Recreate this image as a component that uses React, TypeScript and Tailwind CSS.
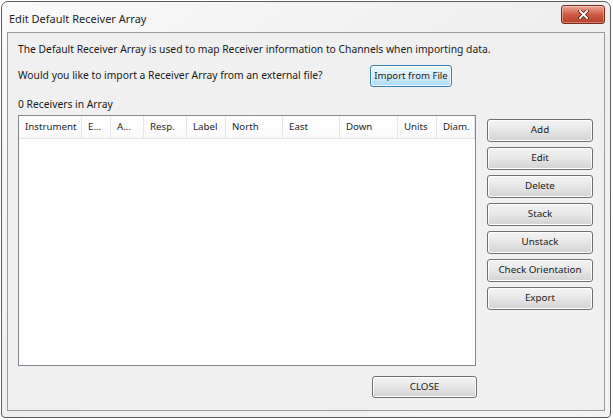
import React from "react";

const columns = [
  { label: "Instrument", w: "w-[63px]" },
  { label: "E...", w: "w-[29px]" },
  { label: "A...", w: "w-[33px]" },
  { label: "Resp.", w: "w-[43px]" },
  { label: "Label", w: "w-[39px]" },
  { label: "North", w: "w-[57px]" },
  { label: "East", w: "w-[57px]" },
  { label: "Down", w: "w-[58px]" },
  { label: "Units", w: "w-[39px]" },
  { label: "Diam.", w: "w-[38px]" },
];

const actions = ["Add", "Edit", "Delete", "Stack", "Unstack", "Check Orientation", "Export"];

const WinButton = ({ children, className = "" }: { children: React.ReactNode; className?: string }) => (
  <button
    className={`flex items-center justify-center rounded-[3px] border border-[#707070] bg-gradient-to-b from-[#f4f4f4] via-[#e6e6e6] to-[#d2d2d2] text-[9.8px] text-[#1a1a1a] shadow-[inset_0_0_0_1px_#fcfcfc] ${className}`}
  >
    {children}
  </button>
);

export default function App() {
  return (
    <div className="w-[613px] h-[420px] bg-white p-[1px] font-['Noto_Sans','Open_Sans',sans-serif]">
      <div className="w-[610px] h-[417px] rounded-t-[7px] rounded-b-[4px] border border-[#5c5c5c] bg-gradient-to-br from-[#fafafa] via-[#eeeeee] to-[#f4f4f4] flex flex-col">
        {/* title bar */}
        <div className="h-[30px] flex items-start">
          <span className="ml-[7px] mt-[9px] text-[11px] leading-[15px] text-[#1e1e1e]">
            Edit Default Receiver Array
          </span>
          <div className="ml-auto mr-[5px] mt-[3px] w-[44px] h-[19px] rounded-[3px] border border-[#7a2a1c] bg-gradient-to-b from-[#e9a797] via-[#d05a44] to-[#b8402a] shadow-[inset_0_0_0_1px_rgba(255,255,255,0.35)] flex items-center justify-center">
            <svg width="11" height="9" viewBox="0 0 11 9">
              <path d="M2 1 L9 8 M9 1 L2 8" stroke="#4a1a12" strokeWidth="3.4" strokeLinecap="square" />
              <path d="M2 1 L9 8 M9 1 L2 8" stroke="#ffffff" strokeWidth="1.9" strokeLinecap="square" />
            </svg>
          </div>
        </div>

        {/* client area */}
        <div className="mx-[5px] h-[379px] border border-[#9a9a9a] bg-[#f0f0f0] pl-[10px] flex flex-col text-[10.3px] text-[#1a1a1a]">
          <div className="mt-[8px] h-[16px] leading-[16px]">
            The Default Receiver Array is used to map Receiver information to Channels when importing data.
          </div>
          <div className="mt-[8px] h-[22px] flex items-center">
            <span className="w-[352px]">Would you like to import a Receiver Array from an external file?</span>
            <button className="w-[82px] h-[22px] rounded-[3px] border border-[#3c7fb1] bg-gradient-to-b from-[#eaf6fd] via-[#d9f0fc] to-[#a7d9f5] text-[9.6px] text-[#1a1a1a] whitespace-nowrap shadow-[inset_0_0_0_1px_#f4fbff]">
              Import from File
            </button>
          </div>
          <div className="mt-[9px] h-[16px] leading-[16px]">0 Receivers in Array</div>

          <div className="mt-[3px] flex">
            <div className="w-[458px] h-[251px] border border-[#828790] bg-white flex flex-col">
              <div className="h-[23px] flex border-b border-[#e5e5e5] bg-gradient-to-b from-white to-[#fafafa]">
                {columns.map((c) => (
                  <div
                    key={c.label}
                    className={`${c.w} h-full pl-[6px] flex items-center border-r border-[#e3e6ea] text-[9.7px] text-[#262626] whitespace-nowrap overflow-hidden`}
                  >
                    {c.label}
                  </div>
                ))}
              </div>
            </div>

            <div className="ml-[11px] mt-[4px] flex flex-col gap-[5px]">
              {actions.map((a) => (
                <WinButton key={a} className="w-[106px] h-[23px]">
                  {a}
                </WinButton>
              ))}
            </div>
          </div>

          <div className="mt-[10px] flex">
            <WinButton className="ml-[354px] w-[105px] h-[22px] text-[9.6px]">CLOSE</WinButton>
          </div>
        </div>
      </div>
    </div>
  );
}
